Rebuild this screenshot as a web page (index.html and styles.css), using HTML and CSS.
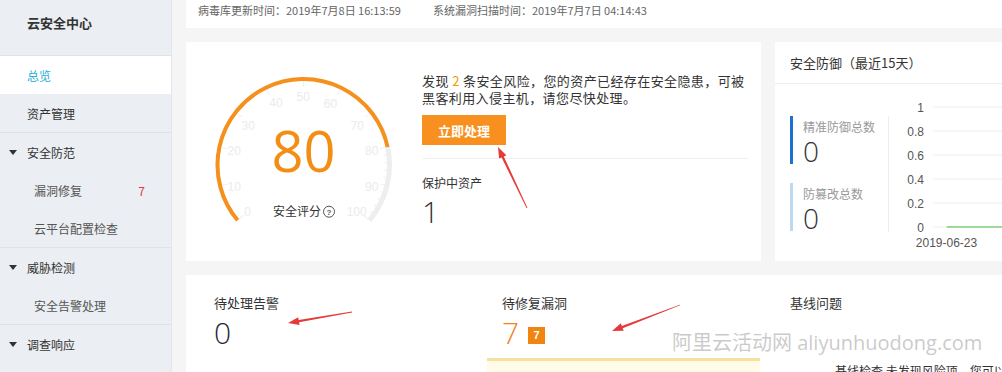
FILE: index.html
```html
<!DOCTYPE html>
<html lang="zh-CN">
<head>
<meta charset="utf-8">
<title>云安全中心 - 总览</title>
<link rel="stylesheet" href="styles.css">
</head>
<body>
<div class="app">
  <aside class="sidebar">
    <div class="side-title">云安全中心</div>
    <div class="group">
      <div class="nav-item active">总览</div>
      <div class="nav-item">资产管理</div>
    </div>
    <div class="group">
      <div class="nav-item group-title"><span class="caret"></span>安全防范</div>
      <div class="nav-item sub">漏洞修复<span class="count">7</span></div>
      <div class="nav-item sub">云平台配置检查</div>
    </div>
    <div class="group">
      <div class="nav-item group-title"><span class="caret"></span>威胁检测</div>
      <div class="nav-item sub">安全告警处理</div>
    </div>
    <div class="group">
      <div class="nav-item group-title"><span class="caret"></span>调查响应</div>
    </div>
  </aside>

  <main class="main">
    <div class="card topbar">
      <span class="topbar-item">病毒库更新时间：2019年7月8日 16:13:59</span>
      <span class="topbar-item">系统漏洞扫描时间：2019年7月7日 04:14:43</span>
    </div>

    <div class="row">
      <section class="card overview">
        <svg class="gauge" width="236" height="219" viewBox="0 0 236 219">
          <g class="ticks" transform="translate(117.5,123)">
            <line x1="78" y1="0" x2="84" y2="0" transform="rotate(-220)"/>
            <line x1="78" y1="0" x2="84" y2="0" transform="rotate(-194)"/>
            <line x1="78" y1="0" x2="84" y2="0" transform="rotate(-168)"/>
            <line x1="78" y1="0" x2="84" y2="0" transform="rotate(-142)"/>
            <line x1="78" y1="0" x2="84" y2="0" transform="rotate(-116)"/>
            <line x1="78" y1="0" x2="84" y2="0" transform="rotate(-90)"/>
            <line x1="78" y1="0" x2="84" y2="0" transform="rotate(-64)"/>
            <line x1="78" y1="0" x2="84" y2="0" transform="rotate(-38)"/>
            <line x1="78" y1="0" x2="84" y2="0" transform="rotate(-12)"/>
            <line x1="78" y1="0" x2="84" y2="0" transform="rotate(14)"/>
            <line x1="78" y1="0" x2="84" y2="0" transform="rotate(40)"/>
            <line x1="81" y1="0" x2="84" y2="0" transform="rotate(-6.8)"/>
            <line x1="81" y1="0" x2="84" y2="0" transform="rotate(-1.6)"/>
            <line x1="81" y1="0" x2="84" y2="0" transform="rotate(3.6)"/>
            <line x1="81" y1="0" x2="84" y2="0" transform="rotate(8.8)"/>
            <line x1="81" y1="0" x2="84" y2="0" transform="rotate(19.2)"/>
            <line x1="81" y1="0" x2="84" y2="0" transform="rotate(24.4)"/>
            <line x1="81" y1="0" x2="84" y2="0" transform="rotate(29.6)"/>
            <line x1="81" y1="0" x2="84" y2="0" transform="rotate(34.8)"/>
          </g>
          <path class="arc-rest" d="M201.62 105.12 A86 86 0 0 1 183.38 178.28"/>
          <path class="arc-value" d="M51.62 178.28 A86 86 0 1 1 201.62 105.12"/>
          <g class="scale">
            <text x="61.7" y="173.7">0</text>
            <text x="48.3" y="148.7">10</text>
            <text x="48.3" y="113">20</text>
            <text x="62.3" y="88">30</text>
            <text x="90" y="65.3">40</text>
            <text x="117.3" y="58.7">50</text>
            <text x="144.5" y="66">60</text>
            <text x="171.3" y="88">70</text>
            <text x="185.7" y="113">80</text>
            <text x="185.7" y="148.7">90</text>
            <text x="170.7" y="173.7">100</text>
          </g>
          <text class="score" x="117.5" y="130">80</text>
          <text class="score-label" x="87" y="174">安全评分</text>
          <circle class="help" cx="143" cy="169.7" r="5.5"/>
          <text class="help-q" x="143" y="172.6">?</text>
        </svg>

        <div class="risk">
          <p class="risk-text">发现 <span class="hl">2</span> 条安全风险，您的资产已经存在安全隐患，可被黑客利用入侵主机，请您尽快处理。</p>
          <button class="btn-primary" type="button">立即处理</button>
          <div class="divider"></div>
          <div class="protect-label">保护中资产</div>
          <div class="protect-value">1</div>
        </div>
      </section>

      <section class="card defense">
        <div class="card-header">安全防御（最近15天）</div>
        <div class="defense-body">
          <div class="stats">
            <div class="stat">
              <div class="stat-label">精准防御总数</div>
              <div class="stat-value">0</div>
            </div>
            <div class="stat stat-light">
              <div class="stat-label">防篡改总数</div>
              <div class="stat-value">0</div>
            </div>
          </div>
          <svg class="chart" width="113" height="176" viewBox="0 0 113 176">
            <g class="grid">
              <line x1="44" y1="23" x2="113" y2="23"/>
              <line x1="44" y1="47" x2="113" y2="47"/>
              <line x1="44" y1="71" x2="113" y2="71"/>
              <line x1="44" y1="95" x2="113" y2="95"/>
              <line x1="44" y1="119" x2="113" y2="119"/>
              <line x1="44" y1="143" x2="113" y2="143"/>
            </g>
            <g class="ylabels">
              <text x="35" y="27.5">1</text>
              <text x="35" y="51.5">0.8</text>
              <text x="35" y="75.5">0.6</text>
              <text x="35" y="99.5">0.4</text>
              <text x="35" y="123.5">0.2</text>
              <text x="35" y="147.5">0</text>
            </g>
            <line class="series" x1="57.7" y1="143" x2="113" y2="143"/>
            <text class="xlabel" x="57.5" y="163">2019-06-23</text>
          </svg>
        </div>
      </section>
    </div>

    <section class="card pending">
      <div class="pending-col">
        <div class="pending-title">待处理告警</div>
        <div class="pending-value">0</div>
      </div>
      <div class="pending-col">
        <div class="pending-title">待修复漏洞</div>
        <div class="pending-value-row">
          <span class="pending-value warn">7</span>
          <span class="badge">7</span>
        </div>
        <div class="notice"></div>
      </div>
      <div class="pending-col">
        <div class="pending-title">基线问题</div>
        <p class="baseline-text">基线检查 未发现风险项，您可以</p>
      </div>
    </section>
  </main>
</div>

<div class="watermark">阿里云活动网 <span class="watermark-latin">aliyunhuodong.com</span></div>

<svg class="annotations" width="1002" height="372" viewBox="0 0 1002 372">
  <polygon points="498,147 506.3,155.2 503.8,156.4 527.4,207.8 526.6,208.2 501.6,157.4 499.1,158.6"/>
  <polygon points="288,323 298.2,317.2 298.65,319.96 351.93,311.6 352.07,312.4 299.05,322.32 299.5,325.1"/>
  <polygon points="612,331 620.84,323.33 621.84,325.95 679.86,304.63 680.14,305.37 622.7,328.19 623.7,330.8"/>
</svg>
</body>
</html>
```

FILE: styles.css
```css
* {
  box-sizing: border-box;
  margin: 0;
  padding: 0;
}

html,
body {
  width: 1002px;
  height: 372px;
  overflow: hidden;
}

body {
  position: relative;
  font-family: "Noto Sans CJK SC", "Microsoft YaHei", sans-serif;
  font-size: 12px;
  color: #333;
  background: #f5f5f5;
}

.app {
  display: flex;
  height: 372px;
}

/* ---------- sidebar ---------- */
.sidebar {
  width: 172px;
  flex: none;
  background: #ebeef2;
  border-right: 1px solid #e2e5e9;
}

.side-title {
  height: 56px;
  padding-left: 27px;
  line-height: 45px;
  font-size: 13px;
  font-weight: bold;
  color: #333;
  border-bottom: 1px solid #dfe2e6;
}

.group + .group {
  border-top: 1px solid #dfe2e6;
}

.nav-item {
  display: flex;
  align-items: center;
  height: 38px;
  padding-left: 27px;
  font-size: 12px;
  color: #333;
}

.nav-item.active {
  background: #fff;
  color: #27aedb;
}

.group-title {
  padding-left: 9px;
}

.caret {
  width: 0;
  height: 0;
  margin-right: 10px;
  border-left: 4px solid transparent;
  border-right: 4px solid transparent;
  border-top: 5px solid #333;
}

.sub {
  padding-left: 34px;
  padding-right: 26px;
  color: #555;
}

.count {
  margin-left: auto;
  color: #e4393c;
}

/* ---------- main ---------- */
.main {
  flex: 1;
  min-width: 0;
  padding-left: 14px;
  overflow: hidden;
}

.card {
  background: #fff;
}

.topbar {
  display: flex;
  height: 28px;
  padding-left: 12px;
  line-height: 20px;
  font-size: 11px;
  color: #666;
}

.topbar-item:first-child {
  width: 235px;
  flex: none;
}

.row {
  display: flex;
  gap: 14px;
  height: 219px;
  margin-top: 14px;
}

/* overview card */
.overview {
  display: flex;
  width: 575px;
  flex: none;
}

.gauge {
  flex: none;
  display: block;
}

.ticks line {
  stroke: #f0f0f0;
  stroke-width: 1;
}

.arc-rest {
  fill: none;
  stroke: #eeeeee;
  stroke-width: 5;
}

.arc-value {
  fill: none;
  stroke: #f5901e;
  stroke-width: 4;
}

.scale text {
  font-family: "Liberation Sans", Arial, sans-serif;
  font-size: 12px;
  fill: #ebebeb;
  text-anchor: middle;
}

.score {
  font-family: "Open Sans", "Noto Sans", sans-serif;
  font-size: 56px;
  fill: #f28e13;
  text-anchor: middle;
}

.score-label {
  font-size: 12px;
  fill: #333;
}

.help {
  fill: none;
  stroke: #555;
  stroke-width: 1;
}

.help-q {
  font-family: "Liberation Sans", Arial, sans-serif;
  font-size: 8px;
  font-weight: bold;
  fill: #555;
  text-anchor: middle;
}

.risk {
  width: 326px;
  flex: none;
  padding-top: 30px;
}

.risk-text {
  max-width: 326px;
  font-size: 13px;
  line-height: 17px;
  letter-spacing: 0.4px;
  color: #333;
}

.hl {
  color: #f39800;
}

.btn-primary {
  display: block;
  width: 84px;
  height: 30px;
  margin-top: 9px;
  border: none;
  background: #f7901e;
  color: #fff;
  font-family: inherit;
  font-size: 13px;
  font-weight: bold;
}

.divider {
  height: 1px;
  margin-top: 13px;
  background: #f0f0f0;
}

.protect-label {
  margin-top: 15px;
  font-size: 12px;
  line-height: 17px;
}

.protect-value {
  margin-top: 6px;
  font-family: "Open Sans", "Noto Sans", sans-serif;
  font-weight: 300;
  font-size: 30px;
  line-height: 30px;
  color: #333;
}

/* defense card */
.defense {
  flex: 1;
  min-width: 0;
}

.card-header {
  height: 42px;
  padding-left: 15px;
  line-height: 41px;
  font-size: 13px;
  color: #333;
  border-bottom: 1px solid #eee;
}

.defense-body {
  display: flex;
  align-items: flex-start;
}

.stats {
  width: 99px;
  height: 116px;
  flex: none;
  margin-left: 15px;
  margin-top: 32px;
  border-right: 1px solid #eee;
}

.stat {
  height: 48px;
  padding-left: 10px;
  padding-top: 2px;
  border-left: 3px solid #1f6fd1;
}

.stat-light {
  margin-top: 19px;
  border-left-color: #bcd9f2;
}

.stat-label {
  font-size: 12px;
  line-height: 17px;
  color: #999;
}

.stat-value {
  margin-top: 2px;
  font-family: "Open Sans", "Noto Sans", sans-serif;
  font-weight: 300;
  font-size: 28px;
  line-height: 28px;
  color: #333;
}

.chart {
  flex: none;
  display: block;
}

.grid line {
  stroke: #eeeeee;
  stroke-width: 1;
}

.ylabels text {
  font-family: "Liberation Sans", Arial, sans-serif;
  font-size: 12px;
  fill: #555;
  text-anchor: end;
}

.series {
  stroke: #7dd17d;
  stroke-width: 1.5;
}

.xlabel {
  font-family: "Liberation Sans", Arial, sans-serif;
  font-size: 12px;
  fill: #555;
  text-anchor: middle;
}

/* pending card */
.pending {
  display: grid;
  grid-template-columns: 288px 288px 288px;
  height: 97px;
  margin-top: 14px;
  padding: 19px 0 0 28px;
  overflow: hidden;
}

.pending-title {
  font-size: 13px;
  line-height: 18px;
  color: #333;
}

.pending-value {
  display: block;
  margin-top: 6px;
  font-family: "Open Sans", "Noto Sans", sans-serif;
  font-weight: 300;
  font-size: 30px;
  line-height: 30px;
  color: #1f2a3c;
}

.pending-value-row {
  display: flex;
  align-items: center;
  gap: 9px;
  margin-top: 6px;
}

.pending-value-row .pending-value {
  margin-top: 0;
}

.pending-value.warn {
  color: #f5821f;
}

.badge {
  width: 17px;
  height: 17px;
  margin-top: 5px;
  background: #f0850f;
  color: #fff;
  font-family: "Liberation Sans", Arial, sans-serif;
  font-size: 11px;
  font-weight: bold;
  line-height: 17px;
  text-align: center;
}

.notice {
  width: 273px;
  height: 30px;
  margin-top: 10px;
  margin-left: -15px;
  background: #fffbe6;
  border-top: 3px solid #f6e0a0;
}

.baseline-text {
  margin-top: 50px;
  padding-left: 45px;
  font-size: 12px;
  color: #333;
  white-space: nowrap;
}

/* overlays */
.watermark {
  position: absolute;
  left: 672px;
  top: 330px;
  font-family: "Open Sans", "Noto Sans CJK SC", sans-serif;
  font-size: 20px;
  line-height: 26px;
  color: rgba(150, 150, 150, 0.5);
  white-space: nowrap;
}

.watermark-latin {
  letter-spacing: 0;
}

.annotations {
  position: absolute;
  left: 0;
  top: 0;
  pointer-events: none;
}

.annotations polygon {
  fill: #e63a3a;
}
```
